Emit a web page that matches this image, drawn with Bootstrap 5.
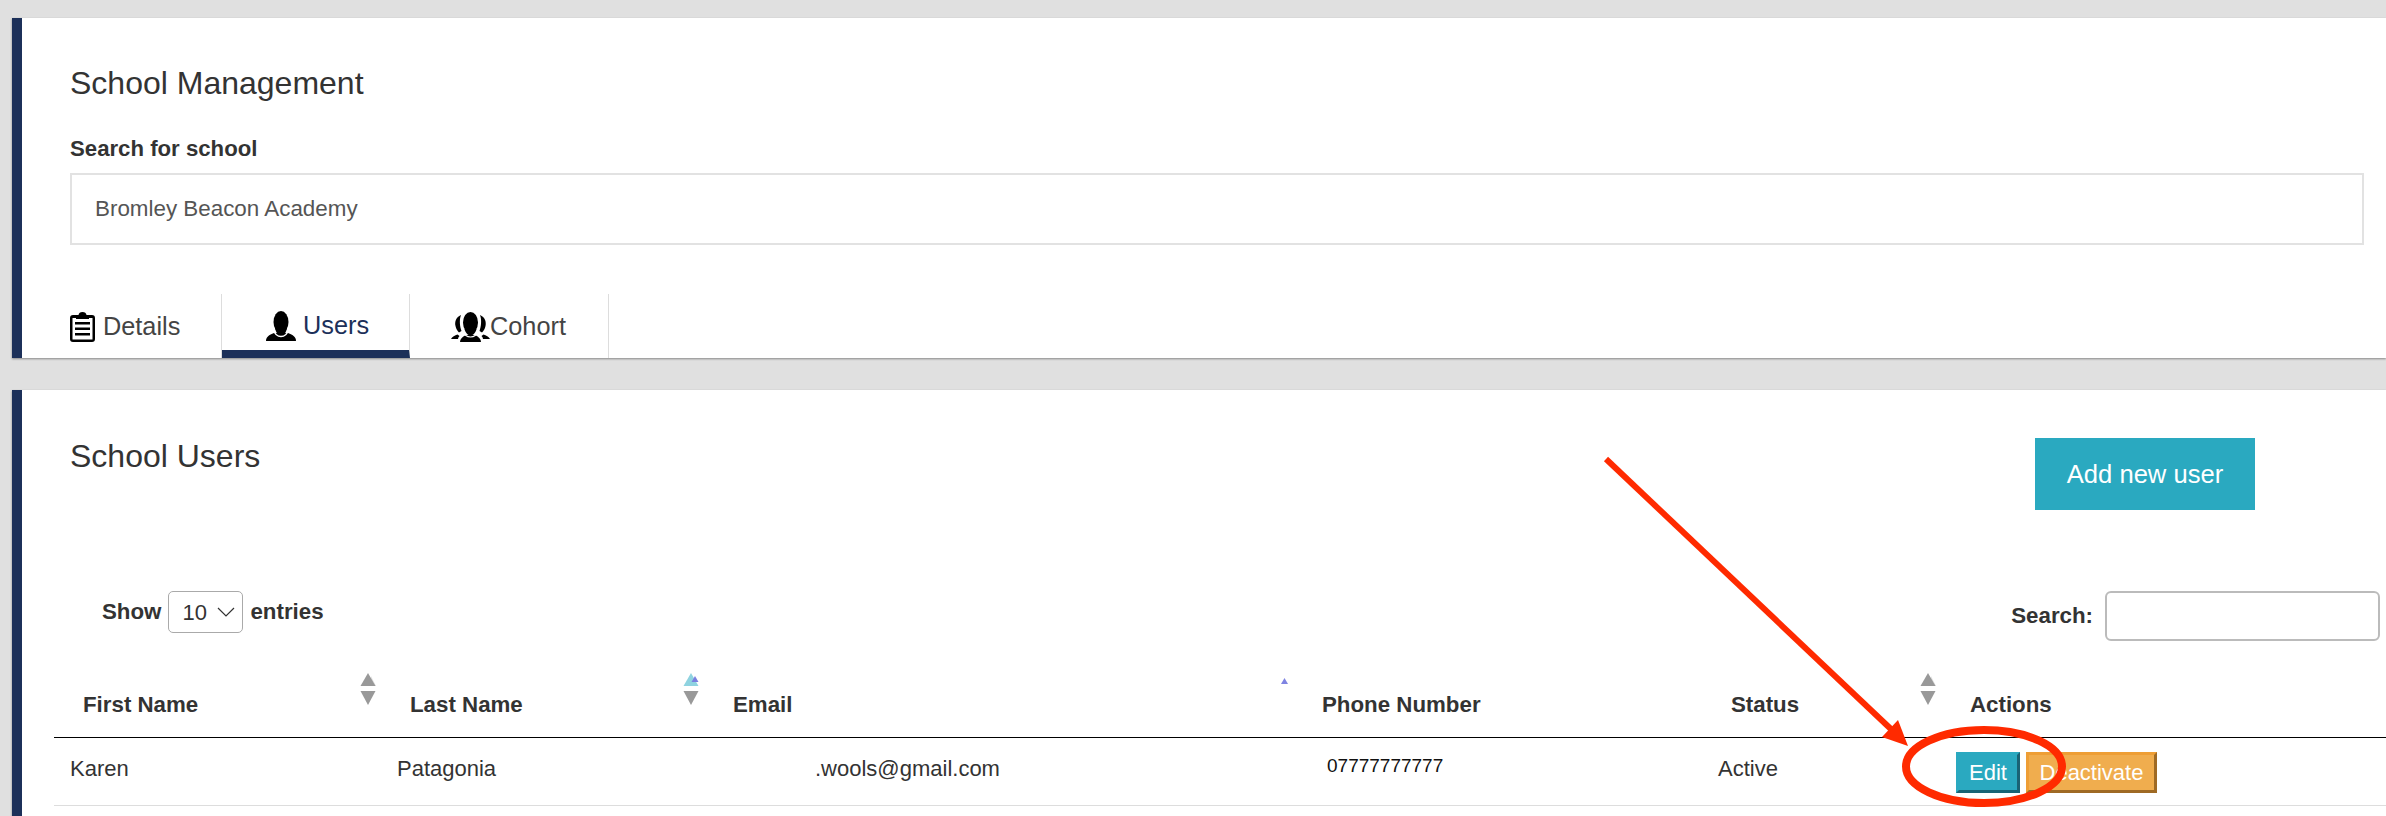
<!DOCTYPE html>
<html>

<head>
    <title>School Management</title>
    <link rel="stylesheet" href="https://cdn.jsdelivr.net/npm/bootstrap@5.3.3/dist/css/bootstrap.min.css" />
    <style>
        html, body { height: 816px; overflow: hidden; }
        body { background: #e0e0e0; font-family: "Liberation Sans", Arial, sans-serif; color: #333; position: relative; }
        .panel-box { margin-left: 12px; background: #fff; border-left: 10px solid #1c3059; box-shadow: 0 1px 2px rgba(0, 0, 0, .4); }
        .panel-top { margin-top: 18px; padding-top: 46px; height: 340px; }
        .panel-users { margin-top: 32px; padding-top: 48px; height: 426px; }
        .page-title { font-size: 32px; line-height: 38px; font-weight: 400; color: #333; margin: 0; }
        .panel-users .page-title { margin-top: -1px; }
        .inner-pad { padding-left: 48px; }
        .school-label { font-size: 22.2px; line-height: 26px; font-weight: 700; margin: 34px 0 11px; display: block; }
        .school-input { width: 2294px; height: 72px; border: 2px solid #e2e2e2; border-radius: 0; font-size: 22.4px; color: #555; padding: 0 23px; }
        .tab-row { margin-top: 49px; height: 64px; }
        .tab-row .nav-link { height: 64px; display: flex; align-items: center; gap: 8px; font-size: 25.3px; color: #444; border-right: 1px solid #ddd; padding: 2px 0 0; }
        .tab-row .tab-details { width: 200px; padding-left: 48px; }
        .tab-row .tab-users { width: 188px; padding-left: 44px; gap: 7px; border-bottom: 8px solid #1c3059; color: #1c3059; padding-top: 8px; }
        .tab-row .tab-cohort { width: 199px; padding-left: 41px; gap: 0; }
        .add-btn { width: 220px; height: 72px; margin-right: 131px; background: #2aa9c0; color: #fff; font-size: 25.6px; border: 0; border-radius: 0; }
        .filter-row { margin-top: 81px; height: 73px; padding: 0 6px 0 80px; font-size: 22.3px; font-weight: 700; }
        .len-select { width: 75px; height: 42px; padding: 0 0 0 13px; margin: 0 7px; font-size: 22px; font-weight: 400; color: #333; border: 1px solid #aaa; border-radius: 5px; background-image: url("data:image/svg+xml,%3csvg xmlns='http://www.w3.org/2000/svg' viewBox='0 0 18 10'%3e%3cpath fill='none' stroke='%23333' stroke-width='1.2' d='M1 1l8 8 8-8'/%3e%3c/svg%3e"); background-size: 18px 10px; background-position: right 7px center; }
        .find-input { width: 275px; height: 50px; margin-left: 12px; border: 2px solid #bbb; border-radius: 6px; }
        .table-wrap { padding-left: 32px; }
        .user-table { table-layout: fixed; width: 2332px; margin: 0; font-size: 22px; }
        .user-table th { position: relative; height: 73px; vertical-align: bottom; padding: 0 0 15px 29px; font-size: 22.3px; font-weight: 700; color: #333; border-bottom: 1px solid #000; }
        .user-table td { height: 68px; vertical-align: middle; padding: 0 0 6px 16px; color: #333; border-bottom: 1px solid #ddd; }
        .sort-mark { position: absolute; top: 9px; right: 5px; width: 16px; height: 32px; }
        .sort-dot { position: absolute; top: 14px; right: 5px; width: 7px; height: 6px; }
        .user-table td.mail-cell { padding-left: 111px; }
        .user-table td.phone-cell { padding: 0 0 10px 34px; font-size: 19px; color: #111; }
        .row-actions { padding-top: 9px; margin-left: -1px; gap: 6px; }
        .act-btn { height: 41px; padding: 0; font-size: 22px; line-height: 1; color: #fff; border-radius: 0; border-width: 3px; border-style: solid; }
        .act-edit { width: 64px; background: #2aa9c0; border-color: #2aa9c0 #1a6375 #1a6375 #2aa9c0; }
        .act-off { width: 131px; background: #f0ad4e; border-color: #ee9e35 #9f6a24 #9f6a24 #ee9e35; }
        .note-layer { position: absolute; top: 0; left: 0; width: 2386px; height: 816px; pointer-events: none; }
    </style>
</head>

<body>
    <div class="panel-box panel-top">
        <div class="inner-pad">
            <h2 class="page-title">School Management</h2>
            <label class="school-label" for="schoolSearch">Search for school</label>
            <input id="schoolSearch" class="form-control school-input" type="text" value="Bromley Beacon Academy" />
        </div>
        <ul class="nav tab-row">
            <li class="nav-item">
                <a class="nav-link tab-details" href="#">
                    <svg width="25" height="30" viewBox="0 0 25 30">
                        <path fill="#000" d="M8.500 3 Q9 0 12.500 0 Q16 0 16.500 3 H22 Q25 3 25 6 V27 Q25 30 22 30 H3 Q0 30 0 27 V6 Q0 3 3 3 Z" />
                        <rect x="2.500" y="6" width="20" height="21.500" fill="#fff" />
                        <rect x="6" y="3" width="13" height="4" fill="#000" />
                        <path fill="#000" d="M5 10h15v2.500H5zM5 15.500h15V18H5zM5 21h15v2.500H5z" />
                    </svg>
                    Details
                </a>
            </li>
            <li class="nav-item">
                <a class="nav-link tab-users" href="#">
                    <svg width="30" height="30" viewBox="0 0 30 30">
                        <path fill="#000" d="M0 30 C0 26 3 24 8 22 L22 22 C27 24 30 26 30 30 Z" />
                        <ellipse cx="15" cy="11" rx="7.500" ry="11" fill="#000" />
                        <path fill="#000" d="M9 17 C10 22 12 24 15 24 C18 24 20 22 21 17 Z" />
                        <path fill="none" stroke="#fff" stroke-width="1.300" d="M7.500 19 C9 24 12 25.500 15 25.500 C18 25.500 21 24 22.500 19" />
                    </svg>
                    Users
                </a>
            </li>
            <li class="nav-item">
                <a class="nav-link tab-cohort" href="#">
                    <svg width="39" height="30" viewBox="0 0 39 30">
                        <!-- side figures -->
                        <path fill="#000" d="M10 3 C5 5 3.500 10 4.500 14 C5 17 6.500 19 8 20.500 L10.500 19 C9 15 8 8 10 3 Z" />
                        <path fill="#000" d="M29 3 C34 5 35.500 10 34.500 14 C34 17 32.500 19 31 20.500 L28.500 19 C30 15 31 8 29 3 Z" />
                        <path fill="#000" d="M0 27 C1 24.500 4 23.500 6.500 22.500 L8.500 24 C7.500 25 7 26 7 27 Z" />
                        <path fill="#000" d="M39 27 C38 24.500 35 23.500 32.500 22.500 L30.500 24 C31.500 25 32 26 32 27 Z" />
                        <!-- middle one -->
                        <path fill="#000" d="M9 30 C9 27 11 25 15 23 L24 23 C28 25 30 27 30 30 Z" />
                        <ellipse cx="19.500" cy="10.500" rx="7.500" ry="10.500" fill="#000" />
                        <path fill="#000" d="M13.500 17 C14.500 21 17 23.500 19.500 23.500 C22 23.500 24.500 21 25.500 17 Z" />
                        <path fill="none" stroke="#fff" stroke-width="1.200" d="M12 19 C13.500 23.500 16.500 25 19.500 25 C22.500 25 25.500 23.500 27 19" />
                    </svg>
                    Cohort
                </a>
            </li>
        </ul>
    </div>

    <div class="panel-box panel-users">
        <div class="inner-pad d-flex justify-content-between align-items-start">
            <h2 class="page-title">School Users</h2>
            <button class="btn add-btn">Add new user</button>
        </div>
        <div class="filter-row d-flex justify-content-between align-items-start">
            <div class="d-flex align-items-center">
                <span>Show</span>
                <select class="form-select len-select">
                    <option>10</option>
                </select>
                <span>entries</span>
            </div>
            <div class="d-flex align-items-center">
                <label for="tableSearch">Search:</label>
                <input id="tableSearch" class="form-control find-input" type="text" />
            </div>
        </div>
        <div class="table-wrap">
            <table class="table user-table">
                <colgroup>
                    <col width="327" />
                    <col width="323" />
                    <col width="589" />
                    <col width="409" />
                    <col width="239" />
                    <col width="445" />
                </colgroup>
                <thead>
                    <tr>
                        <th>First Name
                            <svg class="sort-mark" viewBox="0 0 16 32">
                                <path fill="#e2e2e2" d="M11 3l5 10h-5z" />
                                <path fill="#999" d="M8 0l7.500 13H.5z" />
                                <path fill="#999" d="M.5 18h15L8 32z" />
                            </svg>
                        </th>
                        <th>Last Name
                            <svg class="sort-mark" viewBox="0 0 16 32">
                                <path fill="#8fd3e0" d="M8 0l7.500 13H.5z" />
                                <path fill="#7a7fe0" d="M12 3l3.500 6h-7z" />
                                <path fill="#999" d="M.5 18h15L8 32z" />
                            </svg>
                        </th>
                        <th>Email
                            <svg class="sort-dot" viewBox="0 0 7 6">
                                <path fill="#7f84e2" d="M3.500 0L7 6H0z" />
                            </svg>
                        </th>
                        <th>Phone Number</th>
                        <th>Status
                            <svg class="sort-mark" viewBox="0 0 16 32">
                                <path fill="#e2e2e2" d="M11 3l5 10h-5z" />
                                <path fill="#999" d="M8 0l7.500 13H.5z" />
                                <path fill="#999" d="M.5 18h15L8 32z" />
                            </svg>
                        </th>
                        <th>Actions</th>
                    </tr>
                </thead>
                <tbody>
                    <tr>
                        <td>Karen</td>
                        <td>Patagonia</td>
                        <td class="mail-cell">.wools@gmail.com</td>
                        <td class="phone-cell">07777777777</td>
                        <td>Active</td>
                        <td>
                            <div class="row-actions d-flex">
                                <button class="btn act-btn act-edit">Edit</button>
                                <button class="btn act-btn act-off">Deactivate</button>
                            </div>
                        </td>
                    </tr>
                </tbody>
            </table>
        </div>
    </div>

    <!-- red markup on top of the screenshot -->
    <svg class="note-layer" viewBox="0 0 2386 816">
        <line x1="1606" y1="459" x2="1893" y2="731" stroke="#ff2a00" stroke-width="6" />
        <path fill="#ff2a00" d="M1898 720L1882 737L1908 746Z" />
        <ellipse cx="1984" cy="766.500" rx="78" ry="36.500" fill="none" stroke="#ff2a00" stroke-width="8" />
    </svg>
</body>

</html>
